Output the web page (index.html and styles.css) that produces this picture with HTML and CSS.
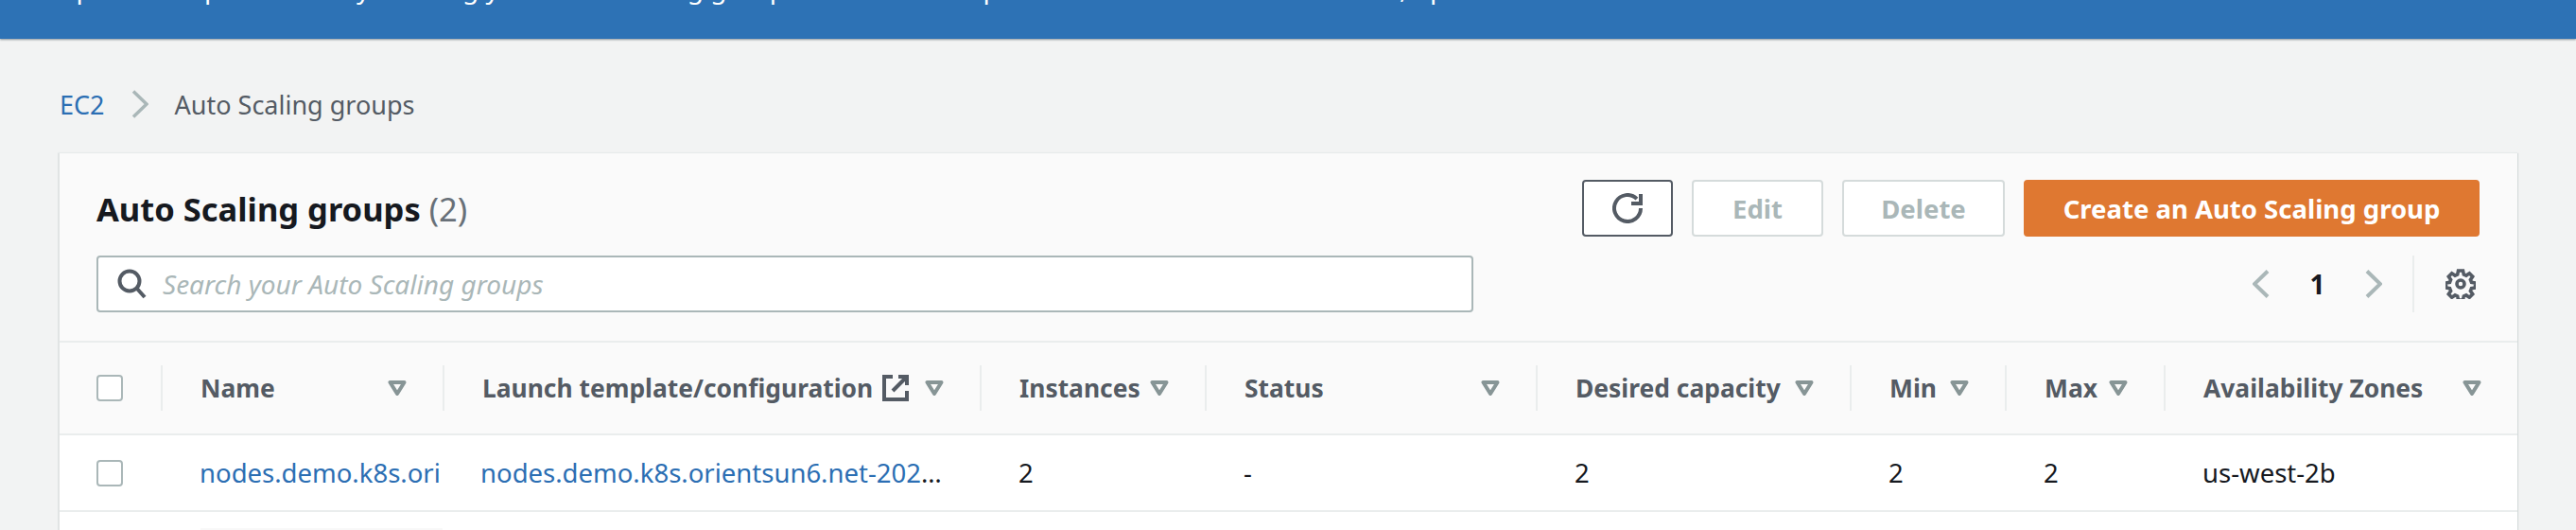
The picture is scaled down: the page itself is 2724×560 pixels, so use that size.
FILE: index.html
```html
<!DOCTYPE html>
<html lang="en">
<head>
  <meta charset="UTF-8">
  <title>Auto Scaling groups</title>
  <link rel="stylesheet" href="styles.css">
</head>
<body>
  <div class="banner">
    <p class="banner-text">Update template used by creating your Auto Scaling group. Use a new template for all the instance in the AZ, update it in time.</p>
  </div>

  <nav class="crumbs">
    <a href="#">EC2</a>
    <svg class="crumb-sep" viewBox="0 0 18 30"><path d="M2 1.5 16 15 2 28.5"/></svg>
    <span>Auto Scaling groups</span>
  </nav>

  <section class="panel">
    <div class="panel-head">
      <div class="head-row">
        <h1>Auto Scaling groups <span class="count">(2)</span></h1>
        <div class="actions">
          <button class="btn btn-refresh">
            <svg class="icon-32" viewBox="0 0 16 16"><path d="M15 8a7 7 0 1 1-2.05-4.95"/><path d="M15 .5v5h-5"/></svg>
          </button>
          <button class="btn btn-edit" disabled>Edit</button>
          <button class="btn btn-delete" disabled>Delete</button>
          <button class="btn btn-primary">Create an Auto Scaling group</button>
        </div>
      </div>
      <div class="head-row tools">
        <div class="search">
          <svg class="search-icon" viewBox="0 0 32 32"><circle cx="13" cy="13" r="10.5"/><path d="M20.5 20.5 29 30"/></svg>
          <span>Search your Auto Scaling groups</span>
        </div>
        <div class="pager">
          <svg class="chev" viewBox="0 0 18 30"><path d="M16 1.5 2 15l14 13.5"/></svg>
          <b>1</b>
          <svg class="chev" viewBox="0 0 18 30"><path d="M2 1.5 16 15 2 28.5"/></svg>
          <span class="pager-sep"></span>
          <svg class="icon-32 gear" viewBox="0 0 32 32">
            <circle cx="16" cy="16" r="4"/>
            <path d="M13.5 2h5l.8 4 2.6 1.1 3.4-2.3 3.4 3.5-2.3 3.3 1.1 2.7 4 .7v5l-4 .7-1.1 2.7 2.3 3.3-3.4 3.5-3.4-2.3-2.6 1.1-.8 4h-5l-.8-4-2.6-1.1-3.4 2.3-3.4-3.5 2.3-3.3-1.1-2.7-4-.7v-5l4-.7 1.1-2.7-2.3-3.3 3.4-3.5 3.4 2.3 2.6-1.1z"/>
          </svg>
        </div>
      </div>
    </div>

    <div class="row row-head">
      <div class="cell-check"><span class="checkbox"></span></div>
      <div class="th"><span>Name</span><svg class="sort" viewBox="0 0 20 16"><path d="M2.5 2h15L10 14z"/></svg></div>
      <div class="th">
        <span class="th-link">Launch template/configuration
          <svg class="ext" viewBox="0 0 28 28"><path d="M11 2H2v24h24v-9"/><path d="M17 2h9v9"/><path d="M26 2 11 17"/></svg>
        </span>
        <svg class="sort" viewBox="0 0 20 16"><path d="M2.5 2h15L10 14z"/></svg>
      </div>
      <div class="th"><span>Instances</span><svg class="sort" viewBox="0 0 20 16"><path d="M2.5 2h15L10 14z"/></svg></div>
      <div class="th"><span>Status</span><svg class="sort" viewBox="0 0 20 16"><path d="M2.5 2h15L10 14z"/></svg></div>
      <div class="th"><span>Desired capacity</span><svg class="sort" viewBox="0 0 20 16"><path d="M2.5 2h15L10 14z"/></svg></div>
      <div class="th"><span>Min</span><svg class="sort" viewBox="0 0 20 16"><path d="M2.5 2h15L10 14z"/></svg></div>
      <div class="th"><span>Max</span><svg class="sort" viewBox="0 0 20 16"><path d="M2.5 2h15L10 14z"/></svg></div>
      <div class="th"><span>Availability Zones</span><svg class="sort" viewBox="0 0 20 16"><path d="M2.5 2h15L10 14z"/></svg></div>
    </div>

    <div class="row row-body">
      <div class="cell-check"><span class="checkbox"></span></div>
      <div class="td"><a href="#">nodes.demo.k8s.ori</a></div>
      <div class="td td-template"><a href="#">nodes.demo.k8s.orientsun6.net-202</a>…</div>
      <div class="td">2</div>
      <div class="td">-</div>
      <div class="td">2</div>
      <div class="td">2</div>
      <div class="td">2</div>
      <div class="td">us-west-2b</div>
    </div>
    <div class="next-row"></div>
  </section>
</body>
</html>
```

FILE: styles.css
```css
html, body {
  margin: 0;
  height: 560px;
  overflow: hidden;
}

body {
  background-color: #f2f3f3;
  color: #16191f;
  font-family: "Noto Sans", sans-serif;
  font-size: 28px;
}

a {
  color: #2b6eb3;
  text-decoration: none;
}

svg {
  flex: none;
  fill: none;
}

.banner {
  height: 41px;
  overflow: hidden;
  background-color: #2d72b5;
  box-shadow: 0 1px 2px #8a9499;
}

.banner-text {
  margin: -33px 0 0 60px;
  line-height: 40px;
  color: #fff;
  white-space: nowrap;
}

.crumbs {
  display: flex;
  align-items: center;
  height: 40px;
  margin: 49px 0 32px 63px;
  font-size: 27px;
  color: #545b64;
}

.crumb-sep {
  width: 18px;
  height: 30px;
  margin: 0 28px;
  stroke: #aab7b8;
  stroke-width: 3.5;
}

.panel {
  min-height: 420px;
  margin: 0 62px 0 61px;
  background-color: #fff;
  border-left: 2px solid #e1e4e4;
  box-shadow: 1px 0 1px #d5dbdb, 0 -1px 1px #eaeded;
}

.panel-head {
  padding: 28px 40px 30px 39px;
  background-color: #fafafa;
  border-bottom: 2px solid #eaeded;
}

.head-row {
  display: flex;
  justify-content: space-between;
  align-items: center;
  height: 60px;
}

.tools {
  margin-top: 20px;
}

h1 {
  margin: 0;
  font-size: 34.5px;
  font-weight: 700;
}

.count {
  color: #687078;
  font-weight: 400;
}

.actions {
  display: flex;
  gap: 20px;
}

.btn {
  height: 60px;
  padding: 0;
  font-family: inherit;
  font-size: 27.5px;
  font-weight: 700;
  background-color: #fff;
  border: 2px solid #d5dbdb;
  border-radius: 4px;
}

.btn-refresh {
  display: flex;
  justify-content: center;
  align-items: center;
  width: 96px;
  border-color: #545b64;
}

.btn-edit {
  width: 139px;
  color: #aab7b8;
}

.btn-delete {
  width: 172px;
  color: #aab7b8;
}

.btn-primary {
  width: 482px;
  color: #fff;
  background-color: #df7831;
  border-color: #df7831;
}

.icon-32 {
  width: 32px;
  height: 32px;
  stroke: #545b64;
  stroke-width: 2;
}

.search {
  display: flex;
  align-items: center;
  box-sizing: border-box;
  width: 1456px;
  height: 60px;
  padding-left: 20px;
  font-style: italic;
  font-size: 28px;
  color: #aab7b8;
  background-color: #fff;
  border: 2px solid #aab7b8;
  border-radius: 4px;
}

.search-icon {
  width: 32px;
  height: 32px;
  margin-right: 16px;
  stroke: #545b64;
  stroke-width: 4;
}

.pager {
  display: flex;
  align-items: center;
  height: 60px;
  padding-right: 4px;
}

.pager b {
  width: 101px;
  text-align: center;
  font-size: 28px;
}

.chev {
  width: 18px;
  height: 30px;
  stroke: #aab7b8;
  stroke-width: 4;
}

.pager-sep {
  width: 2px;
  height: 60px;
  margin: 0 33px 0 32px;
  background-color: #eaeded;
}

.gear {
  stroke-width: 3.6;
}

.row {
  display: grid;
  grid-template-columns: 107px 298px 568px 238px 350px 332px 164px 168px 1fr;
  align-items: center;
  border-bottom: 2px solid #eaeded;
}

.row-head {
  height: 96px;
  background-color: #fafafa;
  font-weight: 700;
  font-size: 26.4px;
  color: #545b64;
}

.row-body {
  height: 79px;
}

.cell-check {
  display: flex;
  padding-left: 39px;
}

.checkbox {
  box-sizing: border-box;
  width: 28px;
  height: 28px;
  background-color: #fff;
  border: 2px solid #aab7b8;
  border-radius: 4px;
}

.th {
  display: flex;
  justify-content: space-between;
  align-items: center;
  height: 48px;
  padding: 0 38px 0 40px;
  border-left: 2px solid #eaeded;
  white-space: nowrap;
}

.th-link {
  display: flex;
  align-items: center;
  gap: 10px;
}

.sort {
  width: 20px;
  height: 16px;
  stroke: #879596;
  stroke-width: 4;
  stroke-linejoin: round;
}

.ext {
  width: 28px;
  height: 28px;
  stroke: #545b64;
  stroke-width: 4;
}

.td {
  padding-left: 41px;
  font-size: 27.5px;
  white-space: nowrap;
}

.td-template {
  padding-left: 40px;
}

.next-row {
  width: 256px;
  height: 2px;
  margin: 17px 0 0 149px;
  background-color: #f8f8f8;
}
```
